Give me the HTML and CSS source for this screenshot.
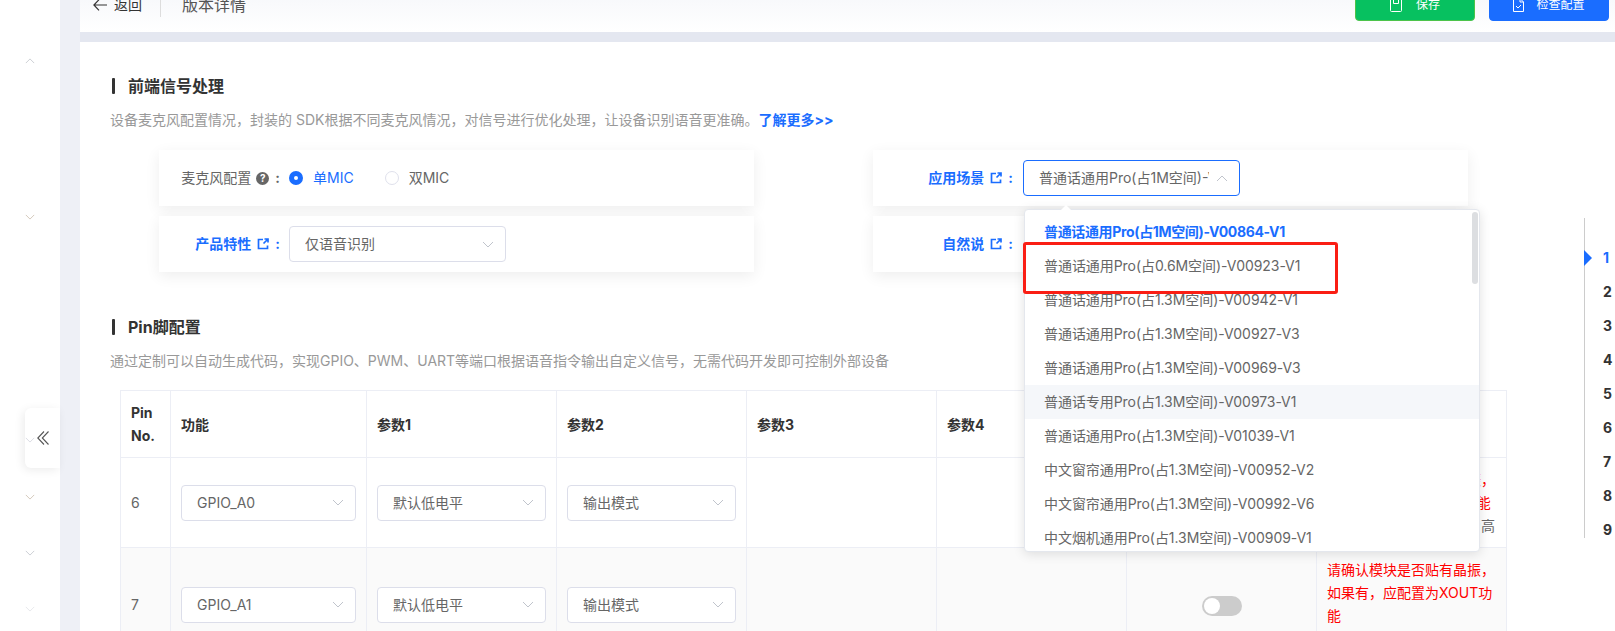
FILE: index.html
```html
<!DOCTYPE html>
<html lang="zh-CN">
<head>
<meta charset="utf-8">
<title>版本详情</title>
<link rel="stylesheet" href="styles.css">
</head>
<body>
<svg class="sprite" width="0" height="0" aria-hidden="true">
  <symbol id="down" viewBox="0 0 12 7"><path d="M1 1l5 5 5-5" fill="none" stroke="currentColor" stroke-width="1"/></symbol>
  <symbol id="up" viewBox="0 0 12 7"><path d="M1 6l5-5 5 5" fill="none" stroke="currentColor" stroke-width="1"/></symbol>
  <symbol id="link" viewBox="0 0 12 12"><path d="M6 1.500H1.500v9h9V7.500M7.500 1h3.500v3.500M11 1L6.500 5.500" fill="none" stroke="currentColor" stroke-width="1.700"/></symbol>
</svg>
<div class="app">
  <aside class="sidebar">
    <svg class="chev chev-first"><use href="#up"/></svg>
    <svg class="chev chev-tan chev-second"><use href="#down"/></svg>
    <svg class="chev chev-third"><use href="#down"/></svg>
    <svg class="chev chev-tan chev-fourth"><use href="#down"/></svg>
    <svg class="chev chev-fifth"><use href="#down"/></svg>
    <svg class="chev chev-pale chev-fifth"><use href="#down"/></svg>
    <button class="collapse" type="button" aria-label="收起">
      <svg width="12" height="14" viewBox="0 0 12 14"><path d="M7 .5L.8 7 7 13.500M11.500.5L5.300 7l6.200 6.500" fill="none" stroke="#555" stroke-width="1.100"/></svg>
    </button>
  </aside>
  <div class="content">
    <header class="topbar">
      <div class="topbar-left">
        <svg class="back-icon" width="14" height="12" viewBox="0 0 14 12"><path d="M6 .7L.9 6 6 11.300M1 6h13" fill="none" stroke="#333" stroke-width="1.200"/></svg>
        <span class="back-text">返回</span>
        <span class="divider"></span>
        <span class="page-name">版本详情</span>
      </div>
      <div class="topbar-right">
        <button class="btn btn-green" type="button">
          <svg width="12" height="14" viewBox="0 0 12 14"><path d="M1.500.5h9a1 1 0 0 1 1 1v11a1 1 0 0 1-1 1h-9a1 1 0 0 1-1-1v-11a1 1 0 0 1 1-1zM3.500.5v5h5v-5" fill="none" stroke="#fff"/></svg>
          保存
        </button>
        <button class="btn btn-blue" type="button">
          <svg width="11" height="14" viewBox="0 0 11 14"><path d="M.5.5h6.500l3.500 3.500v9.500H.5zM7 .5V4h3.500M3 8l2 2 3-3" fill="none" stroke="#fff"/></svg>
          检查配置
        </button>
      </div>
    </header>
    <main class="main">
      <section class="section">
        <h2 class="title">前端信号处理</h2>
        <p class="desc">设备麦克风配置情况，封装的 SDK根据不同麦克风情况，对信号进行优化处理，让设备识别语音更准确。<a class="more">了解更多&gt;&gt;</a></p>
        <div class="cards">
          <div class="card">
            <div class="label label-left">麦克风配置<span class="help">?</span><span class="colon">:</span></div>
            <label class="radio radio-on"><span class="dot"></span>单MIC</label>
            <label class="radio"><span class="dot"></span>双MIC</label>
          </div>
          <div class="card">
            <div class="label label-right label-link">应用场景<svg class="link-icon"><use href="#link"/></svg><span class="colon">:</span></div>
            <div class="select-wrap">
              <div class="select select-open">
                <span class="select-text">普通话通用Pro(占1M空间)-V00864-V1</span>
                <svg class="arrow"><use href="#up"/></svg>
              </div>
              <div class="dropdown">
                <span class="dropdown-tip"></span>
                <ul class="options">
                  <li class="option option-active">普通话通用Pro(占1M空间)-V00864-V1</li>
                  <li class="option">普通话通用Pro(占0.6M空间)-V00923-V1</li>
                  <li class="option">普通话通用Pro(占1.3M空间)-V00942-V1</li>
                  <li class="option">普通话通用Pro(占1.3M空间)-V00927-V3</li>
                  <li class="option">普通话通用Pro(占1.3M空间)-V00969-V3</li>
                  <li class="option option-hover">普通话专用Pro(占1.3M空间)-V00973-V1</li>
                  <li class="option">普通话通用Pro(占1.3M空间)-V01039-V1</li>
                  <li class="option">中文窗帘通用Pro(占1.3M空间)-V00952-V2</li>
                  <li class="option">中文窗帘通用Pro(占1.3M空间)-V00992-V6</li>
                  <li class="option">中文烟机通用Pro(占1.3M空间)-V00909-V1</li>
                </ul>
                <span class="scrollbar"></span>
              </div>
              <div class="annotation"></div>
            </div>
          </div>
          <div class="card">
            <div class="label label-left label-link">产品特性<svg class="link-icon"><use href="#link"/></svg><span class="colon">:</span></div>
            <div class="select select-wide">
              <span class="select-text">仅语音识别</span>
              <svg class="arrow"><use href="#down"/></svg>
            </div>
          </div>
          <div class="card">
            <div class="label label-right label-link">自然说<svg class="link-icon"><use href="#link"/></svg><span class="colon">:</span></div>
          </div>
        </div>
      </section>
      <section class="section section-pin">
        <h2 class="title">Pin脚配置</h2>
        <p class="desc">通过定制可以自动生成代码，实现GPIO、PWM、UART等端口根据语音指令输出自定义信号，无需代码开发即可控制外部设备</p>
        <table class="pins">
          <colgroup>
            <col class="c-pin"><col class="c-fn"><col class="c-p"><col class="c-p"><col class="c-p"><col class="c-p"><col class="c-p"><col class="c-p">
          </colgroup>
          <thead>
            <tr>
              <th>Pin No.</th><th>功能</th><th>参数1</th><th>参数2</th><th>参数3</th><th>参数4</th><th></th><th></th>
            </tr>
          </thead>
          <tbody>
            <tr>
              <td>6</td>
              <td><div class="select"><span class="select-text">GPIO_A0</span><svg class="arrow"><use href="#down"/></svg></div></td>
              <td><div class="select"><span class="select-text">默认低电平</span><svg class="arrow"><use href="#down"/></svg></div></td>
              <td><div class="select"><span class="select-text">输出模式</span><svg class="arrow"><use href="#down"/></svg></div></td>
              <td></td><td></td>
              <td class="center"><span class="toggle"></span></td>
              <td class="note"><span class="warn">请确认模块是否贴有晶振，如果有，应配置为XIN功能</span><br>该引脚上电后默认电平为高</td>
            </tr>
            <tr class="row-alt">
              <td>7</td>
              <td><div class="select"><span class="select-text">GPIO_A1</span><svg class="arrow"><use href="#down"/></svg></div></td>
              <td><div class="select"><span class="select-text">默认低电平</span><svg class="arrow"><use href="#down"/></svg></div></td>
              <td><div class="select"><span class="select-text">输出模式</span><svg class="arrow"><use href="#down"/></svg></div></td>
              <td></td><td></td>
              <td class="center"><span class="toggle"></span></td>
              <td class="note"><span class="warn">请确认模块是否贴有晶振，如果有，应配置为XOUT功能</span></td>
            </tr>
          </tbody>
        </table>
      </section>
    </main>
  </div>
  <nav class="anchors">
    <span class="anchor-mark"></span>
    <a class="anchor anchor-on">1</a>
    <a class="anchor">2</a>
    <a class="anchor">3</a>
    <a class="anchor">4</a>
    <a class="anchor">5</a>
    <a class="anchor">6</a>
    <a class="anchor">7</a>
    <a class="anchor">8</a>
    <a class="anchor">9</a>
  </nav>
</div>
</body>
</html>
```
FILE: styles.css
```css
* { box-sizing: border-box; }
html, body { margin: 0; height: 100%; overflow: hidden; background: #fff; }
body { font: 14px/20px Inter, "Noto Sans CJK SC", sans-serif; color: #666; }
.sprite { position: absolute; }
.app { display: flex; height: 631px; overflow: hidden; position: relative; }

.sidebar { position: relative; flex: none; width: 60px; background: #fff; display: flex; flex-direction: column; align-items: center; padding-left: 8px; }
.chev { position: relative; z-index: 2; flex: none; width: 10px; height: 6px; color: #c3c6cc; margin-right: 8px; }
.chev-tan { color: #cdbfb0; }
.chev-pale { color: #e3e4e8; }
.chev-first { margin-top: 58px; }
.chev-second { margin-top: 150px; }
.chev-third { margin-top: 217px; color: #d5d6de; }
.chev-fourth { margin-top: 51px; }
.chev-fifth { margin-top: 50px; }
.collapse { position: absolute; left: 25px; top: 408px; width: 35px; height: 60px; padding: 0 0 0 12px; border: 0; border-radius: 6px 0 0 6px; background: #fff; box-shadow: -2px 2px 10px rgba(0,0,0,.08); display: flex; align-items: center; }

.content { flex: 1; min-width: 0; background: #eef0f6; padding-left: 20px; }
.topbar { height: 54px; margin-top: -22px; display: flex; justify-content: space-between; align-items: center; padding: 0 6px 0 13px; background: linear-gradient(#f3f5f9, #fff); }
.topbar-left { display: flex; align-items: center; }
.back-text { margin-left: 7px; color: #333; }
.divider { width: 1px; height: 24px; background: #ddd; margin: 0 21px 0 18px; }
.page-name { font-size: 16px; color: #555; }
.topbar-right { display: flex; gap: 14px; }
.btn { width: 120px; height: 32px; border-radius: 4px; border: 1px solid transparent; display: flex; align-items: center; justify-content: center; gap: 14px; font: inherit; font-size: 12px; color: #fff; padding: 0; }
.btn-green { background: #07c160; border-color: #4cc34a; }
.btn-blue { background: #1a6dff; border-color: #1a6dff; gap: 12px; }

.main { border-top: 10px solid #e4e7f0; background: #fff; padding: 36px 0 0 30px; height: 650px; }
.title { margin: 0 0 0 2px; display: flex; align-items: center; gap: 13px; font-size: 16px; line-height: 16px; font-weight: 700; color: #333; }
.title::before { content: ""; width: 3px; height: 16px; background: #333; border-radius: 1px; }
.desc { margin: 16px 0 19px; color: #999; white-space: nowrap; }
.more { color: #1a6dff; font-weight: 700; }
.section-pin { margin-top: 47px; }

.cards { display: grid; grid-template-columns: 595px 595px; column-gap: 119px; row-gap: 10px; margin-top: 20px; margin-left: 49px; }
.card { height: 56px; background: #fff; box-shadow: 0 4px 14px rgba(0,0,0,.07); display: flex; align-items: center; }
.label { flex: none; text-align: right; display: flex; align-items: center; justify-content: flex-end; padding-right: 10px; }
.label-left { width: 130px; padding-right: 9px; }
.label-right { width: 150px; }
.label-link { color: #1a6dff; font-weight: 700; }
.colon { margin-left: 6px; font-weight: 700; }
.help { width: 13px; height: 13px; margin-left: 5px; border-radius: 50%; background: #666; color: #fff; font-size: 10px; line-height: 13px; text-align: center; font-weight: 700; }
.link-icon { width: 12px; height: 12px; margin-left: 6px; color: #1a6dff; }
.radio { display: flex; align-items: center; gap: 10px; margin-right: 31px; }
.dot { width: 14px; height: 14px; border-radius: 50%; border: 1px solid #dfe1ec; background: #fff; }
.radio-on { color: #1a6dff; }
.radio-on .dot { border: 5px solid #1a6dff; }

.select { height: 36px; width: 100%; border: 1px solid #dcdeea; border-radius: 4px; background: #fff; display: flex; align-items: center; gap: 7px; padding: 0 11px 0 15px; }
.select-text { flex: 1; min-width: 0; overflow: hidden; white-space: nowrap; color: #666; }
.arrow { flex: none; width: 12px; height: 7px; color: #c0c4cc; }
.select-wide { width: 217px; }
.select-wrap { position: relative; width: 217px; }
.select-open { border-color: #1a6dff; }

.dropdown { position: absolute; z-index: 5; left: 1px; top: 49px; width: 456px; height: 343px; background: #fff; border: 1px solid #e4e7ed; border-radius: 4px; box-shadow: 0 2px 12px rgba(0,0,0,.12); }
.dropdown-tip { position: absolute; left: 35px; top: -5px; width: 0; height: 0; border: 6px solid transparent; border-top: 0; border-bottom-color: #fff; }
.options { list-style: none; margin: 0; padding: 5px 0 0; height: 100%; overflow: hidden; }
.option { height: 34px; line-height: 34px; padding-left: 19px; color: #666; white-space: nowrap; letter-spacing: -.06px; }
.option-active { color: #1a6dff; font-weight: 700; letter-spacing: -.35px; }
.option-hover { background: #f5f7fa; }
.scrollbar { position: absolute; right: 1px; top: 2px; width: 6px; height: 72px; border-radius: 3px; background: #dcdee1; }
.annotation { position: absolute; z-index: 6; left: 0; top: 82px; width: 315px; height: 52px; border: 3px solid #fa1e14; border-radius: 3px; }

.pins { margin-left: 10px; width: 1387px; table-layout: fixed; border-collapse: collapse; }
.c-pin { width: 50px; }
.c-fn { width: 196px; }
.c-p { width: 190px; }
.pins th, .pins td { border: 1px solid #eceef5; padding: 10px; line-height: 23px; text-align: left; }
.pins th { color: #333; font-weight: 700; }
.row-alt td { background: #fafafa; height: 114px; }
.pins td.center { text-align: center; }
.pins td.note { vertical-align: top; }
.warn { color: #f00; }
.toggle { display: inline-block; vertical-align: middle; width: 40px; height: 20px; border-radius: 10px; background: #ccc; position: relative; }
.toggle::after { content: ""; position: absolute; left: 2px; top: 2px; width: 16px; height: 16px; border-radius: 50%; background: #fff; }

.anchors { position: absolute; left: 1584px; top: 218px; height: 320px; width: 31px; border-left: 1px solid #ccc; padding: 23px 0 0 18px; }
.anchor-mark { position: absolute; left: -1px; top: 32px; width: 0; height: 0; border: 8px solid transparent; border-left-color: #1a6dff; border-right: 0; }
.anchor { display: block; height: 34px; line-height: 34px; font-weight: 700; color: #333; }
.anchor-on { color: #1a6dff; }
```
